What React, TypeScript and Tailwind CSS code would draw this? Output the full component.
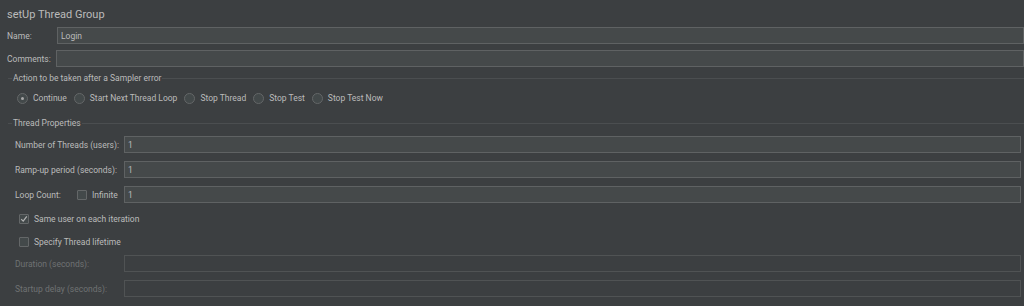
import { type ReactNode } from 'react';

const font = { fontFamily: 'Roboto, "Liberation Sans", sans-serif' };

function Field({ value = '', disabled = false }: { value?: string; disabled?: boolean }) {
  return (
    <div
      className={
        'flex h-[17px] flex-1 items-center border px-[3px] ' +
        (disabled ? 'border-[#505354] bg-[#3c3f41]' : 'border-[#5f6263] bg-[#45494a] text-[#bbbbbb]')
      }
    >
      {value}
    </div>
  );
}

function Radio({ label, checked = false }: { label: string; checked?: boolean }) {
  return (
    <div className="flex items-center gap-[5px]">
      <span className="flex h-[11px] w-[11px] items-center justify-center rounded-full border border-[#646768] bg-[#43494a]">
        {checked ? <span className="h-[3px] w-[3px] rounded-full bg-[#a9a9a9]" /> : null}
      </span>
      <span>{label}</span>
    </div>
  );
}

function Checkbox({ checked = false }: { checked?: boolean }) {
  return (
    <span className="flex h-[10px] w-[10px] shrink-0 items-center justify-center rounded-[1px] border border-[#646768] bg-[#43494a]">
      {checked ? (
        <svg width="8" height="8" viewBox="0 0 8 8" fill="none">
          <path d="M1.2 4.2 L3.2 6.2 L6.8 1.4" stroke="#b4b4b4" strokeWidth="1.2" />
        </svg>
      ) : null}
    </span>
  );
}

function Legend({ children }: { children: ReactNode }) {
  return (
    <div className="flex h-[12px] items-center">
      <span className="h-px w-[4px] bg-[#4b4e50]" />
      <span className="px-[1px]">{children}</span>
      <span className="h-px flex-1 bg-[#4b4e50]" />
    </div>
  );
}

function Row({ label, children, dim = false }: { label: string; children: ReactNode; dim?: boolean }) {
  return (
    <div className="flex h-[17px] items-center pr-[3px]">
      <span className={'w-[109px] shrink-0 ' + (dim ? 'text-[#6f7273]' : '')}>{label}</span>
      {children}
    </div>
  );
}

export default function App() {
  return (
    <div
      className="h-[306px] w-[1024px] overflow-hidden whitespace-nowrap bg-[#3c3f41] text-[8.5px] leading-[12px] text-[#bbbbbb]"
      style={font}
    >
      <div className="pl-[7px] pt-[6px] text-[11px] leading-[18px]">setUp Thread Group</div>

      <div className="mt-[3px] flex h-[17px] items-center pl-[7px]">
        <span className="w-[50px] shrink-0">Name:</span>
        <Field value="Login" />
      </div>
      <div className="mt-[6px] flex h-[17px] items-center pl-[7px]">
        <span className="w-[49px] shrink-0">Comments:</span>
        <Field />
      </div>

      <div className="mt-[5px] pl-[8px]">
        <Legend>Action to be taken after a Sampler error</Legend>
      </div>
      <div className="mt-[7px] flex h-[14px] items-center gap-[7px] pl-[17px]">
        <Radio label="Continue" checked />
        <Radio label="Start Next Thread Loop" />
        <Radio label="Stop Thread" />
        <Radio label="Stop Test" />
        <Radio label="Stop Test Now" />
      </div>

      <div className="mt-[12px] pl-[8px]">
        <Legend>Thread Properties</Legend>
      </div>

      <div className="mt-[7px] flex flex-col gap-[8px] pl-[15px]">
        <Row label="Number of Threads (users):">
          <Field value="1" />
        </Row>
        <Row label="Ramp-up period (seconds):">
          <Field value="1" />
        </Row>
        <div className="flex h-[17px] items-center pr-[3px]">
          <span className="w-[62px] shrink-0">Loop Count:</span>
          <span className="flex w-[47px] shrink-0 items-center gap-[5px]">
            <Checkbox />
            <span>Infinite</span>
          </span>
          <Field value="1" />
        </div>
      </div>

      <div className="mt-[9px] flex h-[14px] items-center gap-[5px] pl-[19px]">
        <Checkbox checked />
        <span>Same user on each iteration</span>
      </div>
      <div className="mt-[9px] flex h-[14px] items-center gap-[5px] pl-[19px]">
        <Checkbox />
        <span>Specify Thread lifetime</span>
      </div>

      <div className="mt-[6px] flex flex-col gap-[8px] pl-[15px]">
        <Row label="Duration (seconds):" dim>
          <Field disabled />
        </Row>
        <Row label="Startup delay (seconds):" dim>
          <Field disabled />
        </Row>
      </div>
    </div>
  );
}
